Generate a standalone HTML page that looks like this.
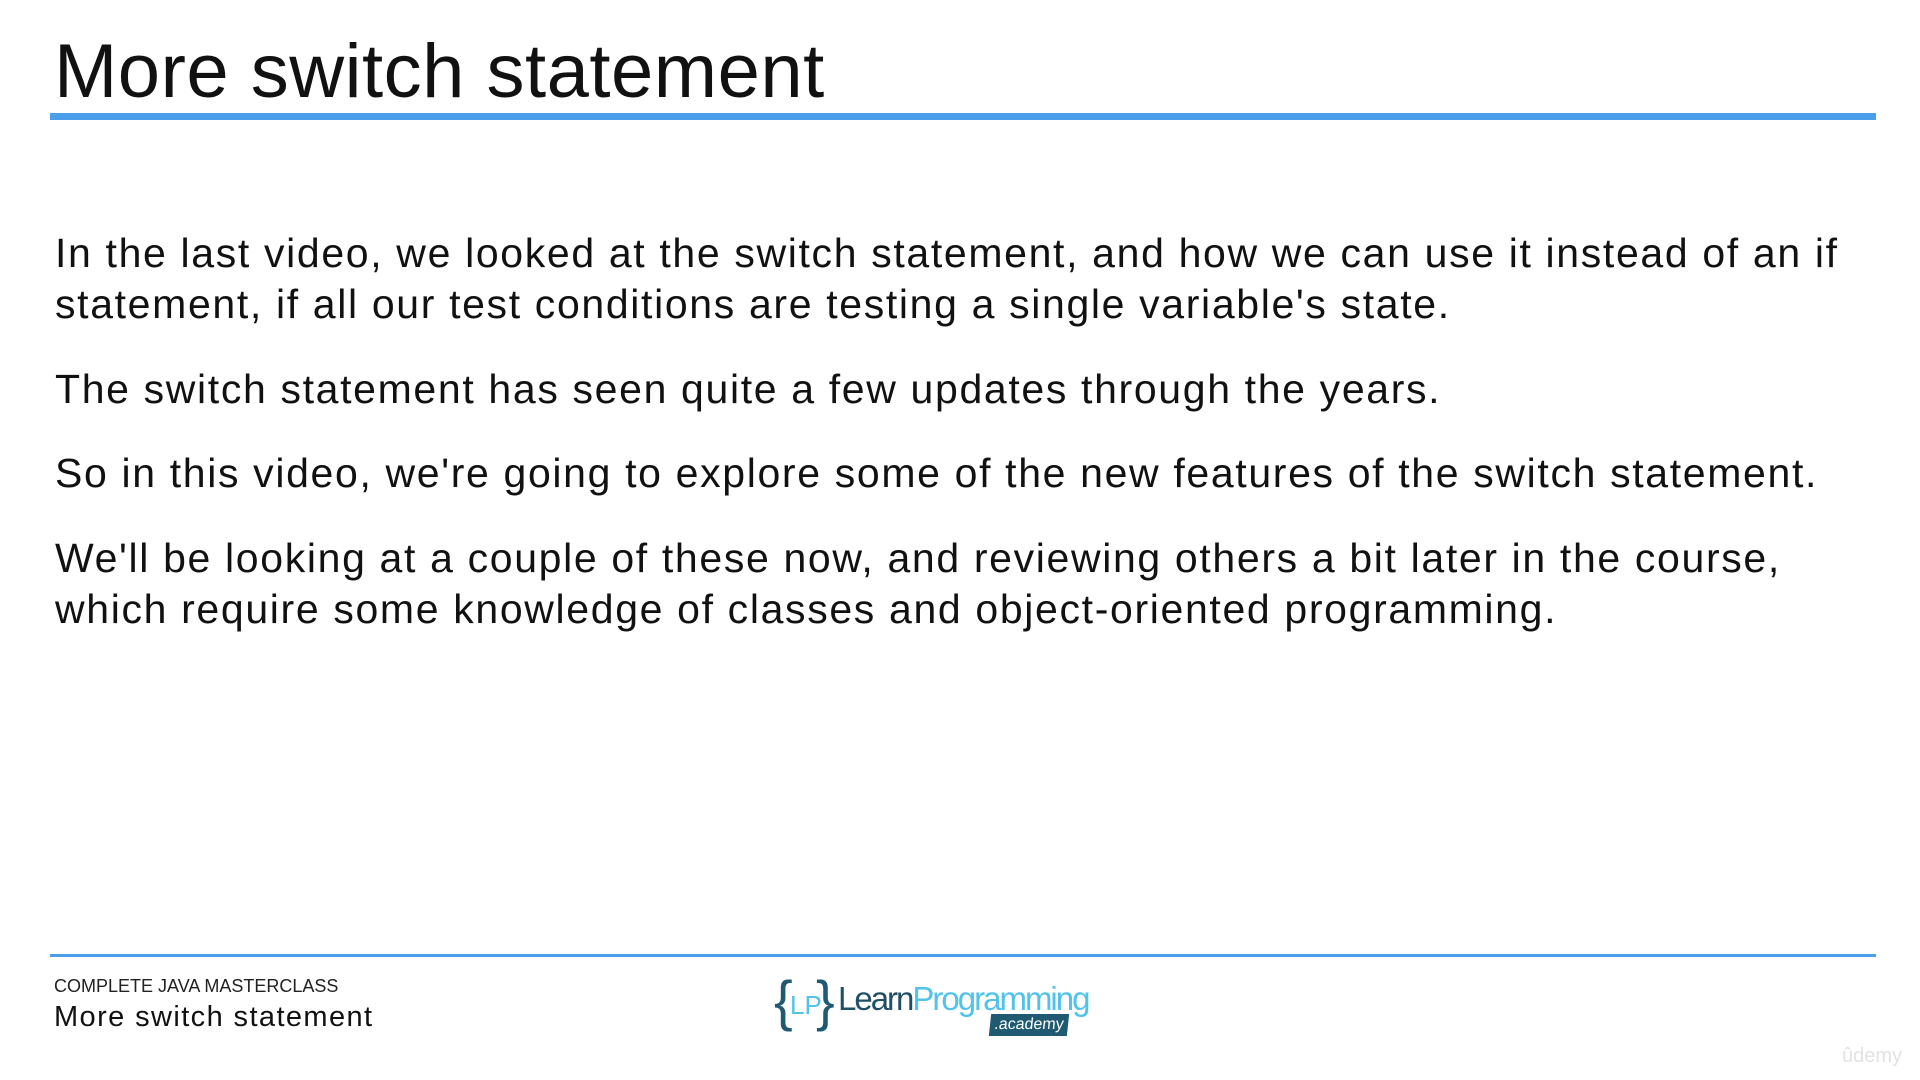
<!DOCTYPE html>
<html><head><meta charset="utf-8"><style>
body{margin:0;width:1920px;height:1080px;background:#fff;position:relative;overflow:hidden;font-family:"Liberation Sans",sans-serif;color:#111}
.a{position:absolute;white-space:nowrap}
.t{left:54px;top:28px;font-size:76px;letter-spacing:0.5px}
.l{left:55px;font-size:41px;letter-spacing:1.65px}
</style></head><body>
<div class="a t">More switch statement</div>
<div class="a" style="left:50px;top:113px;width:1826px;height:7px;background:#4b9fea"></div>
<div class="a l" style="top:230px">In the last video, we looked at the switch statement, and how we can use it instead of an if</div>
<div class="a l" style="top:281px">statement, if all our test conditions are testing a single variable's state.</div>
<div class="a l" style="top:366px">The switch statement has seen quite a few updates through the years.</div>
<div class="a l" style="top:450px">So in this video, we're going to explore some of the new features of the switch statement.</div>
<div class="a l" style="top:535px">We'll be looking at a couple of these now, and reviewing others a bit later in the course,</div>
<div class="a l" style="top:586px">which require some knowledge of classes and object-oriented programming.</div>
<div class="a" style="left:50px;top:954px;width:1826px;height:3px;background:#4b9fea"></div>
<div class="a" style="left:54px;top:976px;font-size:18px;color:#222">COMPLETE JAVA MASTERCLASS</div>
<div class="a" style="left:54px;top:1001px;font-size:29px;color:#111;letter-spacing:1.4px">More switch statement</div>
<div class="a" style="left:774px;top:968px;font-size:56px;color:#1f5a72;font-weight:300">{</div>
<div class="a" style="left:790px;top:990px;font-size:26px;color:#4fc3ea">LP</div>
<div class="a" style="left:816px;top:968px;font-size:56px;color:#1f5a72">}</div>
<div class="a" style="left:838px;top:980px;font-size:33px;letter-spacing:-2px"><span style="color:#1f4f66">Learn</span><span style="color:#4fc3ea">Programming</span></div>
<div class="a" style="left:990px;top:1014px;width:78px;height:22px;background:#1f5a72;color:#fff;font-size:16px;text-align:center;line-height:21px;transform:skewX(-6deg)">.academy</div>
<div class="a" style="left:1842px;top:1045px;font-size:20px;color:#e2e2e2">ûdemy</div>
</body></html>
